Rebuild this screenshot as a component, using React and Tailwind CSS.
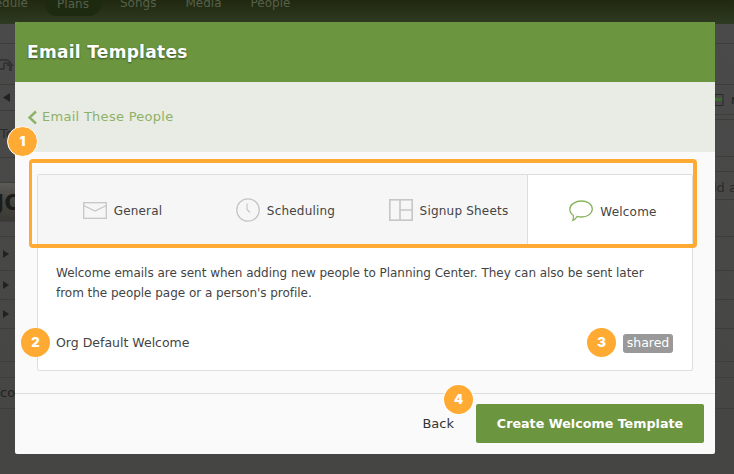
function Badge({ n, className }) {
  return (
    <div className={"absolute w-[29px] h-[29px] rounded-full bg-[#ffab33] flex items-center justify-center text-white text-[13px] font-black font-['Inter',sans-serif] leading-none " + className}>{n}</div>
  );
}
function Row({ h, children, className = "" }) {
  return (
    <div className={"flex items-center border-b border-[#3d3d3b] text-[#222] text-[13px] overflow-hidden whitespace-nowrap " + className} style={{ height: h }}>
      {children}
    </div>
  );
}
const Tri = () => <svg width="8" height="8" viewBox="0 0 8 8" className="ml-0.5"><path d="M1 0L7 4L1 8Z" fill="#222" /></svg>;
const TriL = () => <svg width="10" height="9" viewBox="0 0 10 9" className="ml-0.5"><path d="M8 0L1 4.5L8 9Z" fill="#222" /></svg>;

function Tab({ icon, label, active }) {
  return (
    <div className={"flex items-center justify-center gap-[7px] pl-[6px] text-[12px] tracking-[0.2px] text-[#444] " + (active ? "w-[165px] bg-white border-l border-[#dedede]" : "flex-1 bg-[#f6f6f6] border-b border-[#dedede]")}>
      <span className="-mt-[2px] flex">{icon}</span>
      <span>{label}</span>
    </div>
  );
}

export default function App() {
  return (
    <div className="relative w-[734px] h-[474px] overflow-hidden bg-[#454543] font-['DejaVu_Sans',sans-serif]">
      <div className="h-[24px] bg-gradient-to-b from-[#20290f] to-[#2f3a22] flex items-center overflow-hidden text-[12px] text-[#56604a]">
        <span className="w-[45px] -mt-[18px] whitespace-nowrap overflow-hidden flex justify-end pr-[17px]">edule</span>
        <span className="w-[56px] h-[16px] -mt-[8px] rounded-b-[12px] bg-[#1e2a10] flex justify-center leading-none items-end pb-[6px]">Plans</span>
        <span className="ml-[19px] -mt-[18px]">Songs</span>
        <span className="ml-[29px] -mt-[18px]">Media</span>
        <span className="ml-[29px] -mt-[18px]">People</span>
      </div>
      <div className="flex justify-between bg-gradient-to-b from-[#4a4a4a] to-[#464645]">
        <div className="w-[15px]">
          <Row h={20} />
          <Row h={41}>
            <svg width="15" height="16" viewBox="0 0 15 16" fill="none" className="mt-1 shrink-0"><path d="M0 2h8l3 3H4v6H0" stroke="#222" /><path d="M10 3l4 5h-2v5H9V8H6z" fill="#333" /></svg>
          </Row>
          <Row h={26}><TriL /></Row>
          <Row h={47}><span className="text-[#2a2a2a]">To</span></Row>
          <Row h={25} />
          <Row h={39} className="bg-gradient-to-b from-[#5c5b57] via-[#45443f] to-[#3a3935]">
            <span className="text-[#1c1c1a] text-[22px] font-bold -ml-[4px]">JO</span>
          </Row>
          <Row h={15} />
          <Row h={34}><Tri /></Row>
          <Row h={29}><Tri /></Row>
          <Row h={29}><Tri /></Row>
          <Row h={33} />
          <Row h={16} />
          <Row h={31}><span className="text-[#222]">co</span></Row>
        </div>
        <div className="w-[19px]">
          <Row h={20} />
          <Row h={41} />
          <Row h={30}>
            <svg width="9" height="12" viewBox="0 0 9 12" className="shrink-0"><rect x="0" y="0.5" width="8" height="11" fill="none" stroke="#2a2a2a" /><rect x="0" y="4" width="7" height="3" fill="#3b6b2a" /></svg>
            <span className="ml-[7px]">n</span>
          </Row>
          <Row h={5} />
          <Row h={37} />
          <Row h={15} />
          <Row h={28} className="pt-1"><span className="-ml-[2px] text-[#2a2a2a]">ld a</span></Row>
          <Row h={37} />
          <Row h={34} />
          <Row h={29} />
          <Row h={29} />
          <Row h={33} />
          <Row h={16} />
          <Row h={31} />
        </div>
      </div>

      <div className="absolute left-[15px] top-[22px] w-[700px] h-[432px] bg-[#fafafa] rounded-[2px] flex flex-col overflow-hidden">
        <div className="h-[60px] shrink-0 bg-[#6c953f] flex items-center pl-[12px] pt-[1px] text-white text-[17px] tracking-[0.3px] font-bold [text-shadow:0_1px_2px_rgba(0,0,0,0.45)]">Email Templates</div>
        <div className="h-[70px] shrink-0 bg-[#e9ece4] flex items-center pl-[12px] gap-[4px] text-[13px] tracking-[0.28px] text-[#8eb169]">
          <svg width="11" height="15" viewBox="0 0 11 15" fill="none"><path d="M9 1.5L2.5 7.5L9 13.5" stroke="#8eb169" strokeWidth="2.4" /></svg>
          <span>Email These People</span>
        </div>
        <div className="flex-1 pt-[22px] px-[22px]">
          <div className="h-[197px] bg-white border border-[#dedede] rounded-[2px] flex flex-col">
            <div className="h-[73px] flex shrink-0">
              <Tab label="General" icon={
                <svg width="24" height="17" viewBox="0 0 24 17" fill="none" stroke="#c6c6c6" strokeWidth="1.3"><rect x="0.7" y="0.7" width="22.6" height="15.6" /><path d="M0.7 3.5L12 9L23.3 3.5" /></svg>
              } />
              <Tab label="Scheduling" icon={
                <svg width="24" height="24" viewBox="0 0 24 24" fill="none" stroke="#c6c6c6" strokeWidth="1.3"><circle cx="12" cy="12" r="11.2" /><path d="M11 5.5V11.5L14 14.5" strokeWidth="1.2" /></svg>
              } />
              <Tab label="Signup Sheets" icon={
                <svg width="24" height="22" viewBox="0 0 24 22" fill="none" stroke="#c6c6c6" strokeWidth="1.6"><rect x="0.8" y="0.8" width="22.4" height="20.4" /><path d="M11 0.8V21.2M11 11H23.2" /></svg>
              } />
              <Tab label="Welcome" active icon={
                <svg width="24" height="22" viewBox="0 0 24 22" fill="none" stroke="#8ab560" strokeWidth="1.3"><path d="M12.5 1C18.5 1 23.3 4.6 23.3 9C23.3 13.4 18.5 17 12.5 17C10.9 17 9.5 16.8 8.2 16.4C7 18.3 5.4 20 3.8 20.5C4.6 19 4.6 17.4 4.4 15.5C2.2 14 0.8 11.6 0.8 9C0.8 4.6 6.5 1 12.5 1Z" /></svg>
              } />
            </div>
            <div className="px-[18px] pt-[15px] text-[12px] tracking-[-0.03px] leading-[20px] text-[#444]">
              Welcome emails are sent when adding new people to Planning Center. They can also be sent later<br />from the people page or a person's profile.
            </div>
            <div className="flex items-center justify-between pl-[18px] pr-[19px] mt-[31px] text-[12.5px] text-[#444]">
              <span>Org Default Welcome</span>
              <span className="h-[19px] w-[50px] flex items-center justify-center rounded-[3px] bg-[#999] text-white text-[12.5px]">shared</span>
            </div>
          </div>
        </div>
        <div className="h-[61px] shrink-0 border-t border-[#dedede] flex items-start justify-end pr-[11px] pt-[10px]">
          <span className="mr-[22px] mt-[10px] text-[13px] leading-[20px] text-[#333]">Back</span>
          <button className="w-[228px] h-[39px] rounded-[2px] bg-[#6c953f] text-white text-[12.7px] font-bold">Create Welcome Template</button>
        </div>
      </div>

      <div className="absolute left-[29px] top-[159px] w-[668px] h-[89px] border-y-4 border-l-[3px] border-r-4 border-[#ffab33] rounded-[4px]" />
      <Badge n="1" className="left-[7px] top-[126px] border-[1px] border-white box-content" />
      <Badge n="2" className="left-[21px] top-[328px]" />
      <Badge n="3" className="left-[587px] top-[328px]" />
      <Badge n="4" className="left-[444px] top-[385px] shadow-[0_0_0_1px_white]" />
    </div>
  );
}
